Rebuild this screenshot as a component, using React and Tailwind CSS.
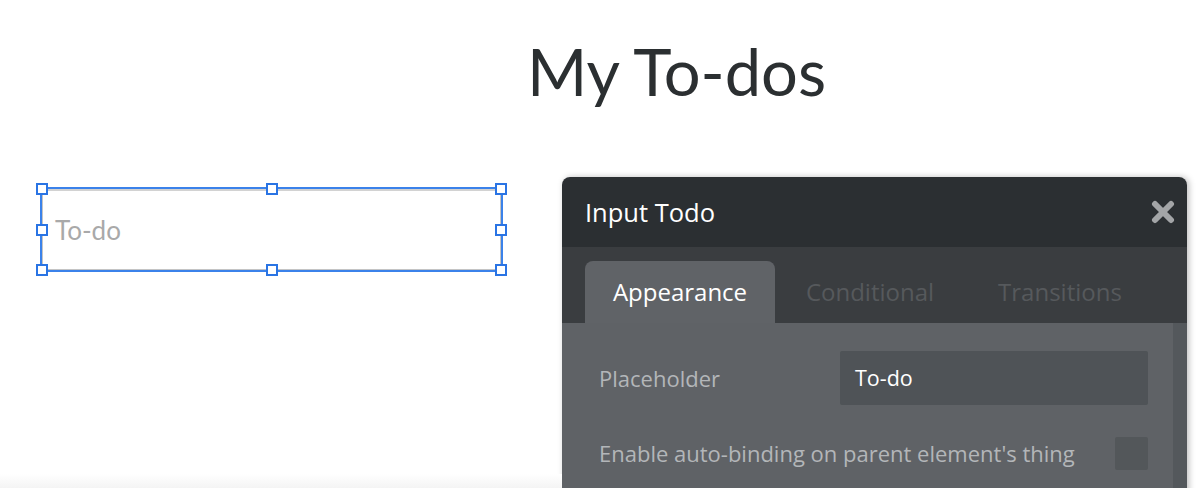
import React from 'react';

const lato = { fontFamily: 'Lato, "Open Sans", sans-serif' };

function Handle({ className }) {
  return (
    <span
      className={`absolute w-[12px] h-[12px] bg-white border-2 border-[#2a74e4] -translate-x-1/2 -translate-y-1/2 ${className}`}
    />
  );
}

function SelectedInput() {
  return (
    <div className="relative ml-[40px] mt-[10px] w-[463px] h-[85px] border-2 border-[#3b82ea]">
      {/* the input itself */}
      <div className="h-full w-full border-t-2 border-l border-r border-b border-t-[#d2d2d2] border-[#c4c4c4] flex items-center pl-[12px]">
        <span className="font-['Lato'] text-[26px] text-[#a9a9a9]">To-do</span>
      </div>
      {/* selection handles */}
      <Handle className="left-0 top-0" />
      <Handle className="left-1/2 top-0" />
      <Handle className="left-full top-0" />
      <Handle className="left-0 top-1/2" />
      <Handle className="left-full top-1/2" />
      <Handle className="left-0 top-full" />
      <Handle className="left-1/2 top-full" />
      <Handle className="left-full top-full" />
    </div>
  );
}

function PropertyPanel() {
  return (
    <div className="ml-[59px] w-[625px] rounded-t-[8px] overflow-hidden shadow-[2px_0_6px_rgba(0,0,0,0.25)] font-['Open_Sans']">
      {/* Header */}
      <div className="h-[70px] bg-[#2b2f32] flex items-center justify-between pl-[23px] pr-[12px]">
        <span className="text-white text-[25.5px]">Input Todo</span>
        <svg width="24" height="24" viewBox="0 0 24 24">
          <path d="M4 4 L20 20 M20 4 L4 20" stroke="#a3a5a7" strokeWidth="6" strokeLinecap="round" />
        </svg>
      </div>

      {/* Tabs */}
      <div className="h-[76px] bg-[#3a3d40] flex items-end pl-[23px]">
        <div className="w-[190px] h-[62px] rounded-t-[8px] bg-[#606367] flex items-center justify-center text-white text-[24px]">
          Appearance
        </div>
        <div className="w-[190px] h-[62px] flex items-center justify-center text-[#56595c] text-[24px]">
          Conditional
        </div>
        <div className="w-[190px] h-[62px] flex items-center justify-center text-[#56595c] text-[24px]">
          Transitions
        </div>
      </div>

      {/* Body */}
      <div className="flex bg-[#5f6266] h-[200px]">
        <div className="flex-1 pl-[37px] pr-[25px] pt-[28px] flex flex-col gap-[32px]">
          <div className="flex items-center">
            <span className="w-[241px] text-[#b3b6b9] text-[22px]">Placeholder</span>
            <div className="flex-1 h-[54px] rounded-[2px] bg-[#4f5357] flex items-center pl-[15px] text-white text-[21.5px]">
              To-do
            </div>
          </div>
          <div className="flex items-center justify-between">
            <span className="text-[#b3b6b9] text-[22px]">Enable auto-binding on parent element's thing</span>
            <div className="w-[33px] h-[33px] rounded-[2px] bg-[#53575a]" />
          </div>
        </div>
        <div className="w-[14px] bg-[#54585c]" />
      </div>
    </div>
  );
}

export default function App() {
  return (
    <div className="relative w-[1200px] h-[488px] overflow-hidden bg-white">
      <h1 className="pl-[527px] pt-[39px] text-[65px] leading-none text-[#2b2f31]" style={lato}>
        My To-dos
      </h1>

      <div className="flex items-start mt-[73px]">
        <SelectedInput />
        <PropertyPanel />
      </div>

      {/* faint fade at the bottom edge */}
      <div className="absolute left-0 bottom-0 w-[562px] h-[14px] bg-gradient-to-b from-white to-[#f4f4f4]" />
    </div>
  );
}
